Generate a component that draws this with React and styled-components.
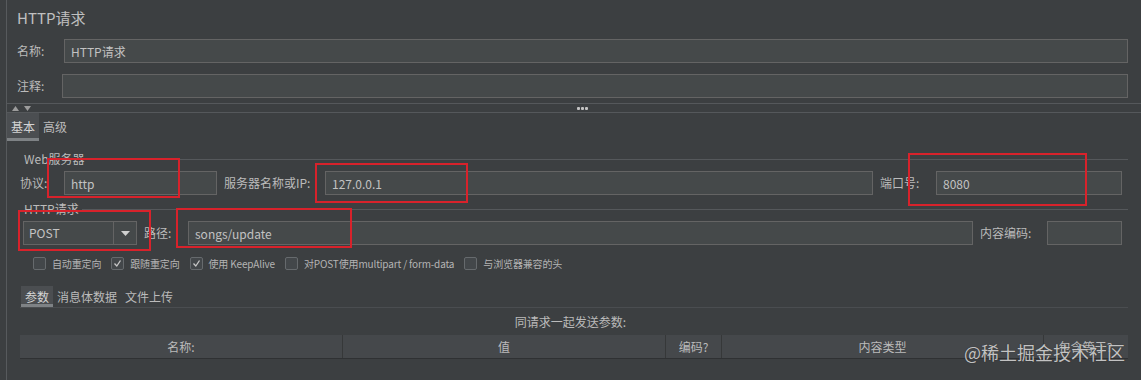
import React from 'react';
import styled, { createGlobalStyle } from 'styled-components';

const GlobalStyle = createGlobalStyle`
  html, body {
    margin: 0;
    padding: 0;
    background: #3c3f41;
  }
  body {
    font-family: "Noto Sans CJK SC", "Noto Sans", sans-serif;
    color: #bbbbbb;
  }
  * { box-sizing: border-box; }
`;

const Page = styled.div`
  position: relative;
  width: 1141px;
  height: 380px;
  overflow: hidden;
  background: #3c3f41;
  padding-left: 6px;
`;

const Frame = styled.div`
  height: 100%;
  border-left: 1px solid #575a5d;
  display: flex;
  flex-direction: column;
`;

const Title = styled.div`
  margin: 8px 0 0 10px;
  font-size: 15px;
  line-height: 20px;
  color: #c0c0c0;
`;

const FieldRow = styled.div`
  display: flex;
  align-items: center;
  height: 24px;
  margin-top: ${p => p.$top || 0}px;
  padding-left: ${p => p.$left || 0}px;
  padding-right: ${p => p.$right || 0}px;
`;

const Label = styled.span`
  flex: none;
  width: ${p => p.$w}px;
  margin-left: ${p => p.$ml || 0}px;
  font-size: 12px;
  line-height: 24px;
  white-space: nowrap;
  color: #bbbbbb;
`;

const Input = styled.input`
  flex: ${p => (p.$w ? 'none' : '1')};
  width: ${p => (p.$w ? `${p.$w}px` : 'auto')};
  min-width: 0;
  height: 24px;
  margin: 0;
  padding: 0 6px;
  background: #45494a;
  border: 1px solid #646464;
  border-radius: 0;
  outline: none;
  font-family: inherit;
  font-size: 12px;
  color: #c2c2c2;
`;

const Splitter = styled.div`
  margin-top: 5px;
  height: 10px;
  border-top: 1px solid #55585b;
  border-bottom: 1px solid #55585b;
  display: flex;
  align-items: center;
  padding: 0 8px 0 5px;
`;

const Arrows = styled.div`
  display: flex;
  gap: 5px;
  flex: none;
`;

const Dots = styled.div`
  flex: 1;
  display: flex;
  justify-content: center;
  gap: 1px;
  span {
    width: 3px;
    height: 3px;
    border-radius: 1px;
    background: #c4c4c4;
  }
`;

const TabBar = styled.div`
  display: flex;
  height: ${p => p.$h}px;
  margin-top: ${p => p.$top || 0}px;
  padding-left: ${p => p.$left || 0}px;
`;

const Tab = styled.div`
  padding: 0 4px;
  font-size: 12px;
  display: flex;
  align-items: center;
  color: ${p => (p.$active ? '#d4d4d4' : '#bbbbbb')};
  background: ${p => (p.$active ? '#4b4e51' : 'transparent')};
  border-bottom: 3px solid ${p => (p.$active ? '#7e8285' : 'transparent')};
  padding-top: 2px;
`;

const GroupTitle = styled.div`
  display: flex;
  align-items: center;
  height: 14px;
  margin-top: ${p => p.$top}px;
  padding-left: 17px;
  padding-right: 13px;
  font-size: 12px;
  line-height: 14px;
  color: #bbbbbb;
  &::after {
    content: '';
    flex: 1;
    height: 1px;
    margin-left: 3px;
    background: #55585b;
  }
`;

const Select = styled.div`
  flex: none;
  display: flex;
  width: 114px;
  height: 24px;
  background: #45494a;
  border: 1px solid #646464;
  font-size: 12px;
`;

const SelectValue = styled.div`
  flex: 1;
  padding-left: 5px;
  line-height: 22px;
  color: #c4c4c4;
`;

const SelectButton = styled.div`
  width: 23px;
  border-left: 1px solid #646464;
  display: flex;
  align-items: center;
  justify-content: center;
`;

const CheckRow = styled.div`
  display: flex;
  align-items: center;
  height: 14px;
  margin-top: 11px;
  padding-left: 26px;
`;

const CheckItem = styled.label`
  display: flex;
  align-items: center;
  margin-right: 10px;
  font-size: 10px;
  letter-spacing: -0.15px;
  color: #b4b4b4;
  white-space: nowrap;
`;

const Box = styled.span`
  width: 13px;
  height: 13px;
  margin-right: 6px;
  border: 1px solid #666a6d;
  border-radius: 2px;
  background: #43474a;
  display: flex;
  align-items: center;
  justify-content: center;
`;

const ParamsPanel = styled.div`
  margin: 0 13px 0 13px;
  border-top: 1px solid #4a4d50;
  display: flex;
  flex-direction: column;
`;

const Caption = styled.div`
  height: 27px;
  line-height: 27px;
  text-align: center;
  font-size: 12px;
  color: #bbbbbb;
  padding-right: 7px;
`;

const HeaderRow = styled.div`
  display: flex;
  height: 24px;
  background: #45484b;
  border-bottom: 1px solid #2f3133;
`;

const HeaderCell = styled.div`
  flex: ${p => (p.$w ? 'none' : '1')};
  width: ${p => (p.$w ? `${p.$w}px` : 'auto')};
  border-right: 1px solid ${p => (p.$last ? 'transparent' : '#363839')};
  text-align: center;
  font-size: 12px;
  line-height: 23px;
  color: #bbbbbb;
`;

const Mark = styled.div`
  position: absolute;
  left: ${p => p.$x}px;
  top: ${p => p.$y}px;
  width: ${p => p.$w}px;
  height: ${p => p.$h}px;
  border: 2px solid #d8222b;
  pointer-events: none;
`;

const Watermark = styled.div`
  position: absolute;
  left: 964px;
  top: 340px;
  font-size: 18px;
  line-height: 24px;
  color: rgba(222, 222, 222, 0.85);
  text-shadow: 0 0 1px #2a2a2a;
  white-space: nowrap;
`;

const Triangle = ({ up }) => (
  <svg width="7" height="5" viewBox="0 0 7 5">
    <polygon points={up ? '0,5 7,5 3.5,0' : '0,0 7,0 3.5,5'} fill="#9c9c9c" />
  </svg>
);

const Check = () => (
  <svg width="9" height="9" viewBox="0 0 9 9">
    <polyline points="1.5,4.5 3.8,7 7.5,1.5" fill="none" stroke="#c8c8c8" strokeWidth="1.3" />
  </svg>
);

const marks = [
  { x: 47, y: 158, w: 133, h: 40 },
  { x: 315, y: 163, w: 153, h: 40 },
  { x: 908, y: 153, w: 179, h: 53 },
  { x: 18, y: 210, w: 133, h: 41 },
  { x: 176, y: 208, w: 176, h: 40 },
];

const options = [
  { text: '自动重定向', on: false },
  { text: '跟随重定向', on: true },
  { text: '使用 KeepAlive', on: true },
  { text: '对POST使用multipart / form-data', on: false },
  { text: '与浏览器兼容的头', on: false },
];

const App = () => (
  <>
    <GlobalStyle />
    <Page>
      <Frame>
        <Title>HTTP请求</Title>
        <FieldRow $top={11} $left={10} $right={13}>
          <Label $w={47}>名称:</Label>
          <Input defaultValue="HTTP请求" readOnly />
        </FieldRow>
        <FieldRow $top={11} $left={10} $right={13}>
          <Label $w={45}>注释:</Label>
          <Input defaultValue="" readOnly />
        </FieldRow>
        <Splitter>
          <Arrows>
            <Triangle up />
            <Triangle />
          </Arrows>
          <Dots><span /><span /><span /></Dots>
        </Splitter>
        <TabBar $h={28}>
          <Tab $active>基本</Tab>
          <Tab>高级</Tab>
        </TabBar>

        <GroupTitle $top={11}>Web服务器</GroupTitle>
        <FieldRow $top={5} $left={13} $right={19}>
          <Label $w={44}>协议:</Label>
          <Input $w={153} defaultValue="http" readOnly />
          <Label $w={101} $ml={7}>服务器名称或IP:</Label>
          <Input defaultValue="127.0.0.1" readOnly />
          <Label $w={56} $ml={7}>端口号:</Label>
          <Input $w={186} defaultValue="8080" readOnly />
        </FieldRow>

        <GroupTitle $top={7}>HTTP请求</GroupTitle>
        <FieldRow $top={5} $left={16} $right={19}>
          <Select>
            <SelectValue>POST</SelectValue>
            <SelectButton>
              <svg width="9" height="5" viewBox="0 0 9 5">
                <polygon points="0,0 9,0 4.5,5" fill="#d0d0d0" />
              </svg>
            </SelectButton>
          </Select>
          <Label $w={44} $ml={7}>路径:</Label>
          <Input defaultValue="songs/update" readOnly />
          <Label $w={67} $ml={7}>内容编码:</Label>
          <Input $w={75} defaultValue="" readOnly />
        </FieldRow>

        <CheckRow>
          {options.map(o => (
            <CheckItem key={o.text}>
              <Box>{o.on && <Check />}</Box>
              {o.text}
            </CheckItem>
          ))}
        </CheckRow>

        <TabBar $h={21} $top={16} $left={14}>
          <Tab $active>参数</Tab>
          <Tab>消息体数据</Tab>
          <Tab>文件上传</Tab>
        </TabBar>

        <ParamsPanel>
          <Caption>同请求一起发送参数:</Caption>
          <HeaderRow>
            <HeaderCell $w={323}>名称:</HeaderCell>
            <HeaderCell $w={323}>值</HeaderCell>
            <HeaderCell $w={56}>编码?</HeaderCell>
            <HeaderCell $w={322}>内容类型</HeaderCell>
            <HeaderCell $last>包含等于?</HeaderCell>
          </HeaderRow>
        </ParamsPanel>
      </Frame>

      {marks.map((m, i) => (
        <Mark key={i} $x={m.x} $y={m.y} $w={m.w} $h={m.h} />
      ))}
      <Watermark>@稀土掘金技术社区</Watermark>
    </Page>
  </>
);

export default App;
